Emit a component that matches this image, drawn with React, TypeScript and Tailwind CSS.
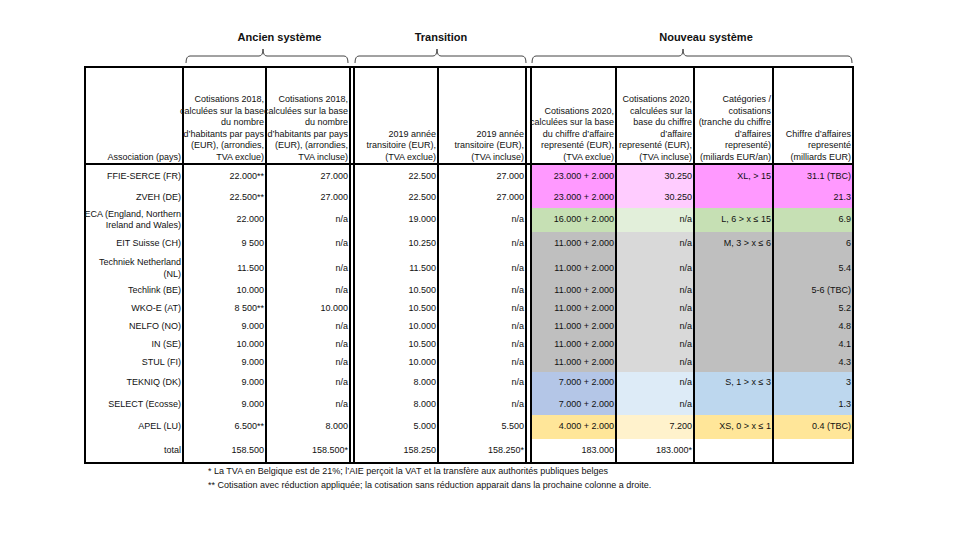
import clsx from 'clsx';

type Band = 'pink' | 'green' | 'gray' | 'blue' | 'yellow' | 'white';

const bandBg: Record<Band, string[]> = {
  pink: ['bg-[#ff99ff]', 'bg-[#ffccff]', 'bg-[#ff99ff]', 'bg-[#ff99ff]'],
  green: ['bg-[#c6e0b4]', 'bg-[#e2efda]', 'bg-[#c6e0b4]', 'bg-[#c6e0b4]'],
  gray: ['bg-[#bfbfbf]', 'bg-[#d9d9d9]', 'bg-[#bfbfbf]', 'bg-[#bfbfbf]'],
  blue: ['bg-[#b4c6e7]', 'bg-[#ddebf7]', 'bg-[#bdd7ee]', 'bg-[#bdd7ee]'],
  yellow: ['bg-[#ffe699]', 'bg-[#fff2cc]', 'bg-[#ffe699]', 'bg-[#ffe699]'],
  white: ['bg-white', 'bg-white', 'bg-white', 'bg-white'],
};

// column widths incl. right border; 'sep' = the double line between groups
const widths = ['w-[98px]', 'w-[83px]', 'w-[84px]', 'sep1', 'w-[84px]', 'w-[88px]', 'sep2', 'w-[85px]', 'w-[78px]', 'w-[79px]', 'w-[78px]'];

const rows: { name: string[]; v: string[]; band: Band; h: string }[] = [
  { name: ['FFIE-SERCE (FR)'], v: ['22.000**', '27.000', '22.500', '27.000', '23.000 + 2.000', '30.250', 'XL, > 15', '31.1 (TBC)'], band: 'pink', h: 'h-[23px]' },
  { name: ['ZVEH (DE)'], v: ['22.500**', '27.000', '22.500', '27.000', '23.000 + 2.000', '30.250', '', '21.3'], band: 'pink', h: 'h-[20px]' },
  { name: ['ECA (England, Northern', 'Ireland and Wales)'], v: ['22.000', 'n/a', '19.000', 'n/a', '16.000 + 2.000', 'n/a', 'L, 6 > x ≤ 15', '6.9'], band: 'green', h: 'h-[24px]' },
  { name: ['EIT Suisse (CH)'], v: ['9 500', 'n/a', '10.250', 'n/a', '11.000 + 2.000', 'n/a', 'M, 3 > x ≤ 6', '6'], band: 'gray', h: 'h-[24px]' },
  { name: ['Techniek Netherland', '(NL)'], v: ['11.500', 'n/a', '11.500', 'n/a', '11.000 + 2.000', 'n/a', '', '5.4'], band: 'gray', h: 'h-[25px]' },
  { name: ['Techlink (BE)'], v: ['10.000', 'n/a', '10.500', 'n/a', '11.000 + 2.000', 'n/a', '', '5-6 (TBC)'], band: 'gray', h: 'h-[19px]' },
  { name: ['WKO-E (AT)'], v: ['8 500**', '10.000', '10.500', 'n/a', '11.000 + 2.000', 'n/a', '', '5.2'], band: 'gray', h: 'h-[18px]' },
  { name: ['NELFO (NO)'], v: ['9.000', 'n/a', '10.000', 'n/a', '11.000 + 2.000', 'n/a', '', '4.8'], band: 'gray', h: 'h-[18px]' },
  { name: ['IN (SE)'], v: ['10.000', 'n/a', '10.500', 'n/a', '11.000 + 2.000', 'n/a', '', '4.1'], band: 'gray', h: 'h-[18px]' },
  { name: ['STUL (FI)'], v: ['9.000', 'n/a', '10.000', 'n/a', '11.000 + 2.000', 'n/a', '', '4.3'], band: 'gray', h: 'h-[18px]' },
  { name: ['TEKNIQ (DK)'], v: ['9.000', 'n/a', '8.000', 'n/a', '7.000 + 2.000', 'n/a', 'S, 1 > x ≤ 3', '3'], band: 'blue', h: 'h-[22px]' },
  { name: ['SELECT (Ecosse)'], v: ['9.000', 'n/a', '8.000', 'n/a', '7.000 + 2.000', 'n/a', '', '1.3'], band: 'blue', h: 'h-[21px]' },
  { name: ['APEL (LU)'], v: ['6.500**', '8.000', '5.000', '5.500', '4.000 + 2.000', '7.200', 'XS, 0 > x ≤ 1', '0.4 (TBC)'], band: 'yellow', h: 'h-[24px]' },
  { name: ['total'], v: ['158.500', '158.500*', '158.250', '158.250*', '183.000', '183.000*', '', ''], band: 'white', h: 'h-[23px]' },
];

const headers: string[][] = [
  ['Association (pays)'],
  ['Cotisations 2018,', 'calculées sur la base', 'du nombre', 'd’habitants par pays', '(EUR), (arrondies,', 'TVA exclue)'],
  ['Cotisations 2018,', 'calculées sur la base', 'du nombre', 'd’habitants par pays', '(EUR), (arrondies,', 'TVA incluse)'],
  ['2019 année', 'transitoire (EUR),', '(TVA exclue)'],
  ['2019 année', 'transitoire (EUR),', '(TVA incluse)'],
  ['Cotisations 2020,', 'calculées sur la base', 'du chiffre d’affaire', 'representé (EUR),', '(TVA exclue)'],
  ['Cotisations 2020,', 'calculées sur la', 'base du chiffre', 'd’affaire', 'representé (EUR),', '(TVA incluse)'],
  ['Catégories /', 'cotisations', '(tranche du chiffre', 'd’affaires', 'representé)', '(miliards EUR/an)'],
  ['Chiffre d’affaires', 'representé', '(milliards EUR)'],
];

function Sep({ w }: { w: string }) {
  return <div className={clsx('h-full shrink-0 border-r-2 border-black bg-white', w === 'sep1' ? 'w-[4px]' : 'w-[5px]')} />;
}

function Cell({ w, bg, last, lines, bottom }: { w: string; bg?: string; last?: boolean; lines: string[]; bottom?: boolean }) {
  return (
    <div
      className={clsx(
        'flex h-full shrink-0 flex-col justify-center pr-[1px] text-right whitespace-nowrap',
        bottom ? 'justify-end' : 'justify-center',
        w,
        bg ?? 'bg-white',
        !last && 'border-r-2 border-black'
      )}
    >
      {lines.map((l, i) => (
        <div key={i} className="flex justify-end">
          <span>{l}</span>
        </div>
      ))}
    </div>
  );
}

function Brace({ width, x0, x1, tip }: { width: number; x0: number; x1: number; tip: number }) {
  return (
    <svg width={width} height={16} className="block overflow-visible">
      <path
        d={`M ${x0} 14 Q ${x0} 7 ${x0 + 4} 7 L ${tip - 4} 7 Q ${tip} 7 ${tip} 0 Q ${tip} 7 ${tip + 4} 7 L ${x1 - 4} 7 Q ${x1} 7 ${x1} 14`}
        fill="none"
        stroke="#444"
        strokeWidth={1}
      />
    </svg>
  );
}

function Row({ children, h, border }: { children: React.ReactNode; h: string; border?: boolean }) {
  return <div className={clsx('flex', h, border && 'border-b-2 border-black')}>{children}</div>;
}

export default function App() {
  return (
    <div className="w-[960px] h-[540px] bg-white text-black font-['Liberation_Sans',Arial,sans-serif]">
      <div className="ml-[84px] pt-[30px]">
        {/* group titles */}
        <div className="flex text-[11px] font-bold leading-[14px] text-[#111]">
          <div className="w-[100px] shrink-0" />
          <div className="w-[167px] shrink-0 pl-[24px] text-center">Ancien système</div>
          <div className="w-[4px] shrink-0" />
          <div className="w-[172px] shrink-0 text-center">Transition</div>
          <div className="w-[5px] shrink-0" />
          <div className="w-[322px] shrink-0 pl-[26px] text-center">Nouveau système</div>
        </div>
        <div className="mt-[5px] flex">
          <div className="w-[100px] shrink-0" />
          <div className="w-[167px] shrink-0">
            <Brace width={167} x0={2} x1={164} tip={79} />
          </div>
          <div className="w-[4px] shrink-0" />
          <div className="w-[172px] shrink-0">
            <Brace width={172} x0={0} x1={171} tip={82} />
          </div>
          <div className="w-[5px] shrink-0" />
          <div className="w-[322px] shrink-0">
            <Brace width={322} x0={0} x1={320} tip={151} />
          </div>
        </div>

        {/* table */}
        <div className="mt-[1px] w-[770px] border-2 border-black text-[9px] leading-[11.5px] text-[#111]">
          <Row h="h-[97px]" border>
            {(() => {
              let k = 0;
              return widths.map((w, i) => {
                if (w.startsWith('sep')) return <Sep key={i} w={w} />;
                const lines = headers[k++];
                return <Cell key={i} w={w} lines={lines} last={i === widths.length - 1} bottom />;
              });
            })()}
          </Row>
          {rows.map((r, ri) => {
            let k = 0;
            return (
              <Row key={ri} h={r.h}>
                {widths.map((w, i) => {
                  if (w.startsWith('sep')) return <Sep key={i} w={w} />;
                  const idx = k++;
                  const lines = idx === 0 ? r.name : [r.v[idx - 1]];
                  const bg = idx >= 5 ? bandBg[r.band][idx - 5] : 'bg-white';
                  return <Cell key={i} w={w} bg={bg} lines={lines} last={i === widths.length - 1} />;
                })}
              </Row>
            );
          })}
        </div>

        {/* footnotes */}
        <div className="pl-[124px] text-[9px] leading-[14px] text-[#111]">
          <p>* La TVA en Belgique est de 21%; l’AIE perçoit la VAT et la transfère aux authorités publiques belges</p>
          <p>** Cotisation avec réduction appliquée; la cotisation sans réduction apparait dans la prochaine colonne a droite.</p>
        </div>
      </div>
    </div>
  );
}
